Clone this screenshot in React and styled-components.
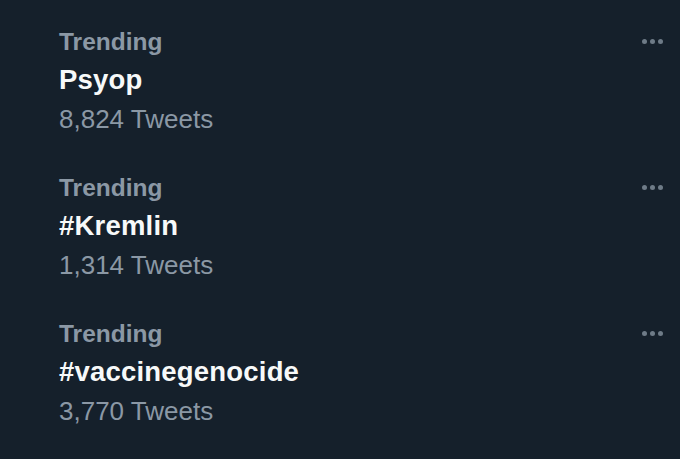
import React from "react";
import styled, { createGlobalStyle } from "styled-components";

const Global = createGlobalStyle`
  html, body { margin: 0; padding: 0; background: #15202b; }
  body { font-family: "Liberation Sans", Arial, sans-serif; }
`;

const Page = styled.div`
  width: 680px;
  height: 459px;
  background: #15202b;
  overflow: hidden;
  display: flex;
  flex-direction: column;
`;

const Row = styled.div`
  display: flex;
  justify-content: space-between;
  align-items: flex-start;
  padding: 26px 17px 0 59px;
  height: 146px;
  box-sizing: border-box;
`;

const Info = styled.div`
  display: flex;
  flex-direction: column;
`;

const Label = styled.div`
  color: #8b98a5;
  font-size: 24.5px;
  font-weight: 700;
  line-height: 32px;
`;

const Title = styled.div`
  color: #f7f9f9;
  font-size: 27.5px;
  font-weight: 700;
  line-height: 44px;
  letter-spacing: 0.2px;
`;

const Count = styled.div`
  color: #8b98a5;
  font-size: 26px;
  line-height: 34px;
`;

const More = styled.div`
  display: flex;
  gap: 3px;
  padding-top: 13px;
`;

const Dot = styled.span`
  width: 5px;
  height: 5px;
  border-radius: 50%;
  background: #6e7b87;
`;

const trends = [
  { title: "Psyop", count: "8,824 Tweets" },
  { title: "#Kremlin", count: "1,314 Tweets" },
  { title: "#vaccinegenocide", count: "3,770 Tweets" },
];

export default function App() {
  return (
    <Page>
      <Global />
      {trends.map((t) => (
        <Row key={t.title}>
          <Info>
            <Label>Trending</Label>
            <Title>{t.title}</Title>
            <Count>{t.count}</Count>
          </Info>
          <More>
            <Dot />
            <Dot />
            <Dot />
          </More>
        </Row>
      ))}
    </Page>
  );
}
